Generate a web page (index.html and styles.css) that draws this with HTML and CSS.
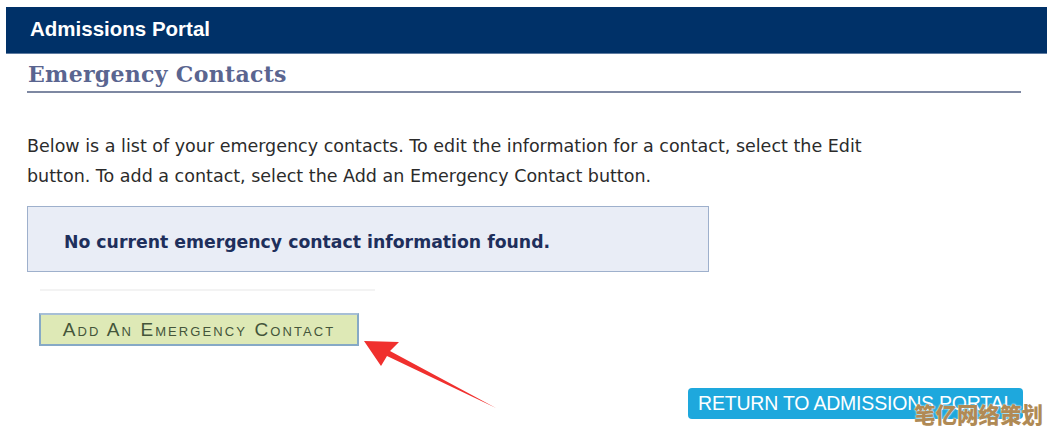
FILE: index.html
```html
<!DOCTYPE html>
<html>
<head>
<meta charset="utf-8">
<link rel="stylesheet" href="styles.css">
</head>
<body>
<header class="topbar">Admissions Portal</header>
<main class="content">
  <h1 class="title">Emergency Contacts</h1>
  <p class="intro">Below is a list of your emergency contacts. To edit the information for a contact, select the Edit<br>button. To add a contact, select the Add an Emergency Contact button.</p>
  <div class="notice">No current emergency contact information found.</div>
  <div class="sep"></div>
  <div class="add-row"><button class="add-btn">Add An Emergency Contact</button></div>
  <div class="return-row"><button class="return-btn">RETURN TO ADMISSIONS PORTAL</button></div>
</main>
<svg class="arrow" width="160" height="90" viewBox="0 0 160 90">
  <polygon points="2,2 37,3 28,12 134,69 25,17 19,27" fill="#f0302e"/>
</svg>
<div class="watermark">笔亿网络策划</div>
</body>
</html>
```
FILE: styles.css
```css
html, body { margin: 0; padding: 0; background: #fff; }
body { position: relative; width: 1047px; height: 434px; overflow: hidden; }
.topbar {
  margin: 7px 0 0 6px;
  height: 47px;
  background: #003168;
  color: #fff;
  font: bold 20.5px "Liberation Sans", Arial, sans-serif;
  line-height: 44px;
  padding-left: 24px;
  border-bottom: 1px solid #5e7ba0;
  box-sizing: border-box;
}
.content { padding: 0 27px 0 27px; }
.title {
  margin: 0;
  padding: 7px 0 0 1px;
  height: 30px;
  font: bold 22px "DejaVu Serif", Georgia, serif;
  color: #5a6590;
  border-bottom: 2px solid #7e88a2;
  width: 993px;
  letter-spacing: 0.3px;
}
.intro {
  margin: 0;
  padding-top: 39px;
  font: 17.5px "DejaVu Sans", Verdana, sans-serif;
  line-height: 29.5px;
  color: #2b2b2b;
}
.notice {
  margin-top: 15px;
  width: 682px;
  height: 66px;
  box-sizing: border-box;
  background: #e9edf6;
  border: 1px solid #9eb0cc;
  padding-left: 36px;
  font: bold 17.3px "DejaVu Sans", Verdana, sans-serif;
  color: #1e2f5c;
  line-height: 70px;
}
.sep {
  margin: 17px 0 0 13px;
  width: 335px;
  height: 2px;
  background: #f3f3f3;
}
.add-row { padding: 22px 0 0 12px; }
.add-btn {
  width: 320px;
  height: 33px;
  background: #dee9b6;
  border: 2px solid #86a9c6;
  border-top-color: #a7bfd6;
  color: #44553a;
  font: 19px "Liberation Sans", Arial, sans-serif;
  font-variant: small-caps;
  letter-spacing: 2.1px;
  padding: 0;
  text-align: center;
}
.return-row { padding: 42px 0 0 661px; }
.return-btn {
  width: 335px;
  height: 31px;
  background: #1ea8dd;
  border: none;
  border-radius: 4px;
  color: #fff;
  font: 19.5px "Liberation Sans", Arial, sans-serif;
  text-align: left;
  padding: 0 0 0 10px;
  letter-spacing: -0.2px;
}
.arrow { position: absolute; left: 362px; top: 339px; }
.watermark {
  position: absolute;
  left: 914px;
  top: 399px;
  font: 900 21.5px "Noto Sans CJK SC", sans-serif;
  color: #b08a55;
  text-shadow: 0 0 2px #fff, 0 0 1px #fff;
  line-height: 30px;
}
```
